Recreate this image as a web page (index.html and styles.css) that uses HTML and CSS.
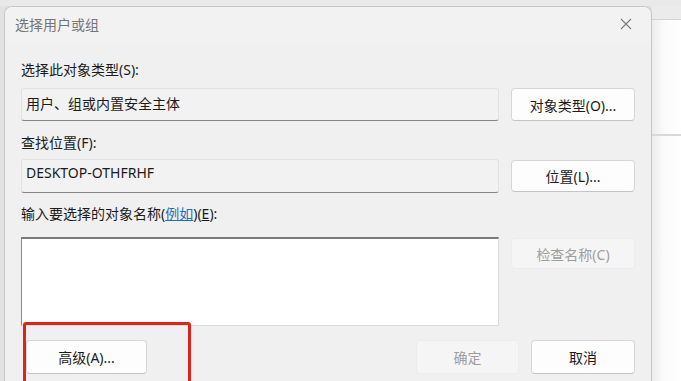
FILE: index.html
```html
<!DOCTYPE html>
<html lang="zh-CN">
<head>
    <meta charset="utf-8">
    <title>选择用户或组</title>
    <link rel="stylesheet" href="styles.css">
</head>
<body>
    <div class="desk">
        <div class="dlg">
            <div class="ttl">
                <span class="ttl-txt">选择用户或组</span>
                <svg class="ttl-x" width="12" height="12" viewBox="0 0 12 12">
                    <path d="M1 1 L11 11 M11 1 L1 11" stroke="#7c7c7c" stroke-width="1.1" fill="none"/>
                </svg>
            </div>

            <div class="dlg-body">
                <div class="lbl lbl1">选择此对象类型(S):</div>
                <div class="row">
                    <div class="fld">用户、组或内置安全主体</div>
                    <button class="btn">对象类型(O)...</button>
                </div>

                <div class="lbl lbl2">查找位置(F):</div>
                <div class="row row-c">
                    <div class="fld fld2">DESKTOP-OTHFRHF</div>
                    <button class="btn">位置(L)...</button>
                </div>

                <div class="lbl lbl3">输入要选择的对象名称(<a class="lnk" href="#">例如</a>)(<u>E</u>):</div>
                <div class="row row-t">
                    <div class="names"></div>
                    <button class="btn btn-chk" disabled>检查名称(C)</button>
                </div>

                <div class="foot">
                    <button class="btn btn-adv">高级(A)...</button>
                    <div class="foot-r">
                        <button class="btn btn-ok" disabled>确定</button>
                        <button class="btn btn-cancel">取消</button>
                    </div>
                </div>
            </div>

            <!-- подсветка кнопки -->
            <div class="mark"></div>
        </div>

        <div class="backwin">
            <div class="bw-head"></div>
            <div class="bw-pane"></div>
            <div class="bw-rest"></div>
        </div>
    </div>
</body>
</html>
```

FILE: styles.css
```css
html, body {
    margin: 0;
    height: 100%;
    overflow: hidden;
}

body {
    background: #e4e4e4;
    font-family: "Noto Sans", "Noto Sans CJK SC", sans-serif;
    font-size: 14px;
    color: #1b1b1b;
}

.desk {
    display: flex;
    height: 100%;
    background: linear-gradient(#e9e9e9 0, #e9e9e9 6px, #e2e2e2 6px);
}

.dlg {
    position: relative;
    width: 646px;
    height: 374px;
    margin: 6px 0 0 4px;
    background: #f0f0f0;
    border: 1px solid #c6c6c6;
    border-bottom: 0;
    border-radius: 8px 8px 0 0;
    overflow: hidden;
    flex-shrink: 0;
}

.ttl {
    display: flex;
    align-items: center;
    justify-content: space-between;
    height: 34px;
    padding: 0 19px 0 10px;
    background: #f2f2f2;
}

.ttl-txt {
    color: #757575;
    font-size: 14px;
}

.dlg-body {
    padding: 0 16px;
}

.lbl {
    height: 20px;
    line-height: 20px;
}

.lbl1 {
    margin-top: 19px;
}

.lbl2 {
    margin-top: 12px;
}

.lbl3 {
    margin-top: 11px;
}

.lnk {
    color: #1f6fb8;
    text-decoration: underline;
}

.row {
    display: grid;
    grid-template-columns: 478px 124px;
    column-gap: 12px;
    margin-top: 8px;
}

.row-c {
    margin-top: 6px;
    align-items: center;
}

.row-t {
    margin-top: 13px;
    align-items: start;
}

.fld {
    box-sizing: border-box;
    height: 33px;
    padding: 0 4px;
    line-height: 29px;
    background: #f2f2f2;
    border: 1px solid #e1e1e1;
    border-bottom: 1px solid #858585;
    border-radius: 3px;
}

.fld2 {
    height: 34px;
    line-height: 25px;
}

.names {
    box-sizing: border-box;
    height: 89px;
    background: #fff;
    border: 1px solid #dcdcdc;
    border-top: 2px solid #7a7a7a;
    border-left: 1px solid #8a8a8a;
}

.btn {
    box-sizing: border-box;
    height: 33px;
    padding: 0;
    font-family: inherit;
    font-size: 14px;
    color: #1b1b1b;
    background: #fdfdfd;
    border: 1px solid #d6d6d6;
    border-bottom-color: #c4c4c4;
    border-radius: 4px;
}

.row-c .btn {
    height: 32px;
}

.btn[disabled] {
    color: #9e9e9e;
    background: #f5f5f5;
    border-color: #ececec;
}

.btn-chk {
    height: 31px;
    margin-top: 1px;
}

.foot {
    display: flex;
    justify-content: space-between;
    margin-top: 14px;
}

.foot .btn {
    height: 34px;
}

.btn-adv {
    width: 121px;
    margin-left: 5px;
}

.foot-r {
    display: flex;
    gap: 12px;
}

.btn-ok {
    width: 103px;
}

.btn-cancel {
    width: 104px;
}

.mark {
    position: absolute;
    left: 18px;
    top: 315px;
    width: 168px;
    height: 72px;
    box-sizing: border-box;
    border: 3px solid #d8261d;
    border-radius: 3px;
}

.backwin {
    flex: 1;
    display: flex;
    flex-direction: column;
    margin-top: 6px;
}

.bw-head {
    height: 13px;
    background: #ebebeb;
    border-bottom: 1px solid #d3d3d3;
}

.bw-pane {
    height: 114px;
    background: linear-gradient(90deg, #ececec, #fafafa 40%, #fff);
    border-bottom: 2px solid #d8d8d8;
}

.bw-rest {
    flex: 1;
    background: linear-gradient(90deg, #ececec, #fafafa 40%, #fff);
}
```
